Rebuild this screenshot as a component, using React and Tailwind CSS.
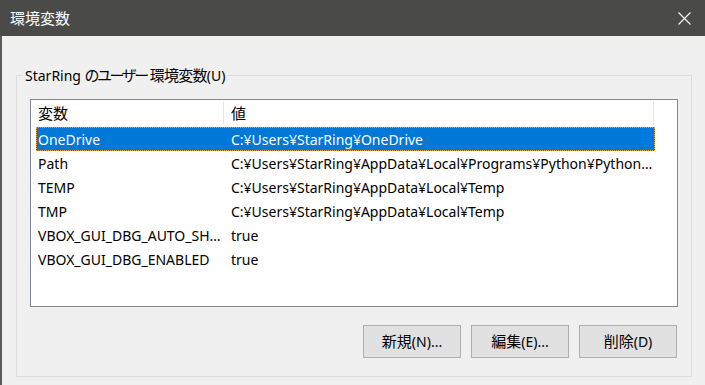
import React from "react";

const rows = [
  { name: "OneDrive", value: "C:¥Users¥StarRing¥OneDrive" },
  { name: "Path", value: "C:¥Users¥StarRing¥AppData¥Local¥Programs¥Python¥Python38¥Scripts¥" },
  { name: "TEMP", value: "C:¥Users¥StarRing¥AppData¥Local¥Temp" },
  { name: "TMP", value: "C:¥Users¥StarRing¥AppData¥Local¥Temp" },
  { name: "VBOX_GUI_DBG_AUTO_SHOW", value: "true" },
  { name: "VBOX_GUI_DBG_ENABLED", value: "true" },
];

const font = "font-['Noto_Sans','Noto_Sans_CJK_JP',sans-serif]";

// Japanese runs are a bit larger than the latin text in the original UI font
const J = ({ children, className = "" }) => <span className={`text-[15px] ${className}`}>{children}</span>;

const Button = ({ children }) => (
  <button className="w-[98px] h-[33px] bg-[#e1e1e1] border border-[#adadad] text-[14px] text-black flex items-center justify-center">
    {children}
  </button>
);

export default function App() {
  return (
    <div className={`w-[705px] h-[385px] bg-[#f0f0f0] flex flex-col overflow-hidden text-[14px] ${font}`}>
      {/* title bar */}
      <div className="h-[36px] bg-[#4a4a48] flex items-center justify-between pl-[10px] pr-[14px] shrink-0">
        <span className="text-white text-[15px] leading-none">環境変数</span>
        <svg width="13" height="13" viewBox="0 0 13 13">
          <path d="M0.5 0.5L12.5 12.5M12.5 0.5L0.5 12.5" stroke="#ffffff" strokeWidth="1.1" fill="none" />
        </svg>
      </div>

      {/* body */}
      <div className="flex-1 border-l-2 border-[#5a5a5a] pl-[14px] pt-[29px]">
        <fieldset className="w-[676px] h-[312px] border border-[#dcdcdc] pl-[6px] pr-[13px]">
          <legend className="px-[2px] leading-[20px] text-black">
            StarRing <J className="tracking-[-2.5px]">のユーザー</J>
            <J className="tracking-[-0.75px] ml-[3px]">環境変数</J>(U)
          </legend>

          <div className="ml-[7px] mt-[13px] w-[648px] h-[208px] bg-white border border-[#828790] pt-[1px]">
            {/* header */}
            <div className="flex h-[24px] ml-[5px] text-[15px] text-black">
              <div className="w-[188px] border-r border-[#e5e5e5] pl-[2px] flex items-center">変数</div>
              <div className="w-[430px] border-r border-[#e5e5e5] pl-[7px] flex items-center">値</div>
            </div>
            <div className="mt-[2px]">
              {rows.map((r, i) => (
                <div
                  key={r.name}
                  className={`flex h-[24px] ml-[5px] w-[619px] items-center ${
                    i === 0
                      ? "bg-[#0078d7] text-white border border-dotted border-[#e8a048]"
                      : "text-black border border-transparent"
                  }`}
                >
                  <div className="w-[187px] pl-[1px] pr-[2px] truncate shrink-0">{r.name}</div>
                  <div className="w-[430px] pl-[7px] truncate">{r.value}</div>
                </div>
              ))}
            </div>
          </div>

          <div className="flex justify-end gap-[10px] mt-[18px] pr-[1px]">
            <Button><J>新規</J>(N)...</Button>
            <Button><J>編集</J>(E)...</Button>
            <Button><J>削除</J>(D)</Button>
          </div>
        </fieldset>
      </div>
    </div>
  );
}
